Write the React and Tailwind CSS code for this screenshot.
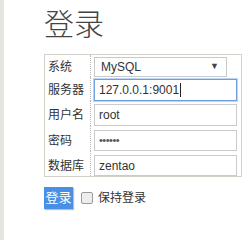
export default function App() {
  const font = { fontFamily: '"Liberation Sans", Arial, "Noto Sans CJK SC", sans-serif' };

  const rows = [
    { label: "系统", pt: "pt-[2px]", h: "h-[20px]", kind: "select", value: "MySQL" },
    { label: "服务器", pt: "pt-[2px]", h: "h-[22px]", kind: "focus", value: "127.0.0.1:9001" },
    { label: "用户名", pt: "pt-[3px]", h: "h-[22px]", kind: "text", value: "root" },
    { label: "密码", pt: "pt-[4px]", h: "h-[21px]", kind: "password", value: "••••••" },
    { label: "数据库", pt: "pt-[4px]", h: "h-[21px]", kind: "text", value: "zentao" },
  ];

  return (
    <div className="flex min-h-[240px] bg-white text-[#333]" style={font}>
      <div className="w-[4px] shrink-0 bg-[#e6e4de]" />
      <div className="pl-[40px]">
        <h1 className="mt-[7px] h-[47px] text-[30px] leading-[36px] font-light text-[#444]">
          登录
        </h1>

        <div className="w-[198px] border border-[#d2d2ca]">
          {rows.map((r) => (
            <div key={r.label} className="flex">
              <div
                className={`w-[46px] shrink-0 border-r border-dotted border-[#bbb] pl-[3px] flex items-center text-[12px] ${r.pt}`}
              >
                {r.label}
              </div>
              <div className={`flex-1 pl-[3px] pr-[4px] ${r.pt}`}>
                {r.kind === "select" && (
                  <div
                    className={`${r.h} w-[133px] border border-[#c9c9c9] flex items-center justify-between pl-[6px] pr-[7px] text-[12px]`}
                  >
                    <span>{r.value}</span>
                    <span className="text-[9px] text-[#444]">▼</span>
                  </div>
                )}
                {r.kind === "focus" && (
                  <div
                    className={`${r.h} border border-[#6e9fe0] shadow-[0_0_0_1px_#bcd3f3] flex items-center pl-[4px] text-[12px]`}
                  >
                    <span>{r.value}</span>
                    <span className="ml-[1px] h-[14px] border-l border-[#222]" />
                  </div>
                )}
                {r.kind === "text" && (
                  <div
                    className={`${r.h} border border-[#cbcbcb] flex items-center pl-[4px] text-[12px]`}
                  >
                    {r.value}
                  </div>
                )}
                {r.kind === "password" && (
                  <div
                    className={`${r.h} border border-[#cbcbcb] flex items-center pl-[4px] text-[11px] text-[#555] tracking-[-0.5px]`}
                  >
                    {r.value}
                  </div>
                )}
              </div>
            </div>
          ))}
        </div>

        <div className="mt-[10px] flex items-center">
          <button className="w-[29px] h-[22px] bg-[#4a8fe6] text-white text-[13px] shadow-[1px_1px_1px_rgba(0,0,0,0.25)]">
            登录
          </button>
          <span className="ml-[8px] w-[12px] h-[12px] border border-[#9a9a9a] rounded-[2px] bg-[#ededed]" />
          <span className="ml-[5px] text-[12px]">保持登录</span>
        </div>
      </div>
    </div>
  );
}
